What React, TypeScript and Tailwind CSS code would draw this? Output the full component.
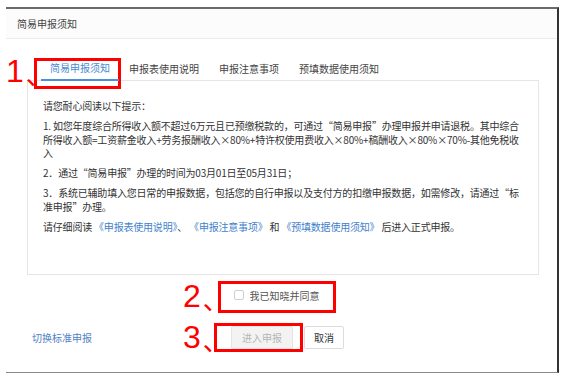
import React from "react";

const font = { fontFamily: '"Noto Sans CJK SC", "Liberation Sans", sans-serif' };
const numFont = { fontFamily: '"Liberation Sans", "Noto Sans CJK SC", sans-serif' };

function Mark({ n, className }: { n: string; className: string }) {
  return (
    <div className={"absolute flex items-end whitespace-nowrap text-[#f00] " + className} style={numFont}>
      <span className="text-[32px] leading-[34px]">{n}</span>
      <span className="relative -top-[1px] ml-[2px] text-[26px] leading-[26px]" style={font}>、</span>
    </div>
  );
}

export default function App() {
  const tabs = ["简易申报须知", "申报表使用说明", "申报注意事项", "预填数据使用须知"];
  return (
    <div className="relative w-[562px] h-[378px] overflow-hidden bg-white pt-[7px] pl-[6px]" style={font}>
      <div className="flex h-[366px] w-[553px] flex-col border-t-2 border-r-2 border-b border-t-[#6a6a6a] border-r-[#333] border-b-[#8a8a8a]">
        {/* header */}
        <div className="flex h-[30px] items-center border-b border-[#ececec] bg-[#fbfcfb] pl-[11px] text-[10px] text-[#444]">
          简易申报须知
        </div>

        {/* body */}
        <div className="ml-[21px] mr-[18px] mt-[17px] flex flex-col">
          <div className="relative z-10 -mb-px flex pl-[14px]">
            {tabs.map((t, i) => (
              <div
                key={t}
                className={
                  i === 0
                    ? "flex h-[25px] items-center border-b-2 border-[#4d8fd6] px-[9px] text-[10px] text-[#4a8ad0]"
                    : "flex h-[25px] items-center px-[10px] text-[10px] text-[#444]"
                }
              >
                {t}
              </div>
            ))}
          </div>
          <div className="flex h-[195px] flex-col gap-[6.5px] border border-[#e6e6e6] bg-white pl-[15px] pt-[18px] text-[10px] leading-[13.5px] tracking-[-0.2px] text-[#333]">
            <div>请您耐心阅读以下提示：</div>
            <div className="whitespace-nowrap">
              <div>1. 如您年度综合所得收入额不超过6万元且已预缴税款的，可通过“简易申报”办理申报并申请退税。其中综合</div>
              <div>所得收入额=工资薪金收入+劳务报酬收入×80%+特许权使用费收入×80%+稿酬收入×80%×70%-其他免税收</div>
              <div>入</div>
            </div>
            <div className="whitespace-nowrap">2．通过“简易申报”办理的时间为03月01日至05月31日；</div>
            <div className="whitespace-nowrap">
              <div>3．系统已辅助填入您日常的申报数据，包括您的自行申报以及支付方的扣缴申报数据，如需修改，请通过“标</div>
              <div>准申报”办理。</div>
            </div>
            <div className="whitespace-nowrap">
              请仔细阅读 <span className="text-[#3f7fcb]">《申报表使用说明》</span>、{" "}
              <span className="text-[#3f7fcb]">《申报注意事项》</span> 和{" "}
              <span className="text-[#3f7fcb]">《预填数据使用须知》</span> 后进入正式申报。
            </div>
          </div>
        </div>

        {/* agree */}
        <div className="mt-[15px] flex h-[10px] items-center justify-center gap-[6px] pr-[10px] text-[10px] text-[#555]">
          <span className="h-[10px] w-[10px] rounded-[2px] border border-[#cfcfcf] bg-white" />
          <span>我已知晓并同意</span>
        </div>

        {/* footer */}
        <div className="mt-[26px] flex items-center pl-[26px]">
          <span className="w-[60px] text-[10px] text-[#4f82c6]">切换标准申报</span>
          <div className="ml-[139px] flex items-center gap-[11px]">
            <div className="flex h-[23px] w-[62px] items-center justify-center rounded-[2px] border border-[#e4e4e4] bg-[#f3f3f3] text-[10px] text-[#b5b5b5]">
              进入申报
            </div>
            <div className="flex h-[23px] w-[40px] items-center justify-center rounded-[2px] border border-[#dcdcdc] bg-white text-[10px] text-[#333]">
              取消
            </div>
          </div>
        </div>
      </div>

      {/* annotations */}
      <div className="absolute left-[34px] top-[58px] h-[31px] w-[87px] border-[3px] border-[#f00]" />
      <div className="absolute left-[218px] top-[281px] h-[32px] w-[118px] border-[3px] border-[#f00]" />
      <div className="absolute left-[214px] top-[323px] h-[29px] w-[89px] border-[3px] border-[#f00]" />

      <Mark n="1" className="left-[6px] top-[54px]" />
      <Mark n="2" className="left-[183px] top-[279px]" />
      <Mark n="3" className="left-[183px] top-[320px]" />
    </div>
  );
}
